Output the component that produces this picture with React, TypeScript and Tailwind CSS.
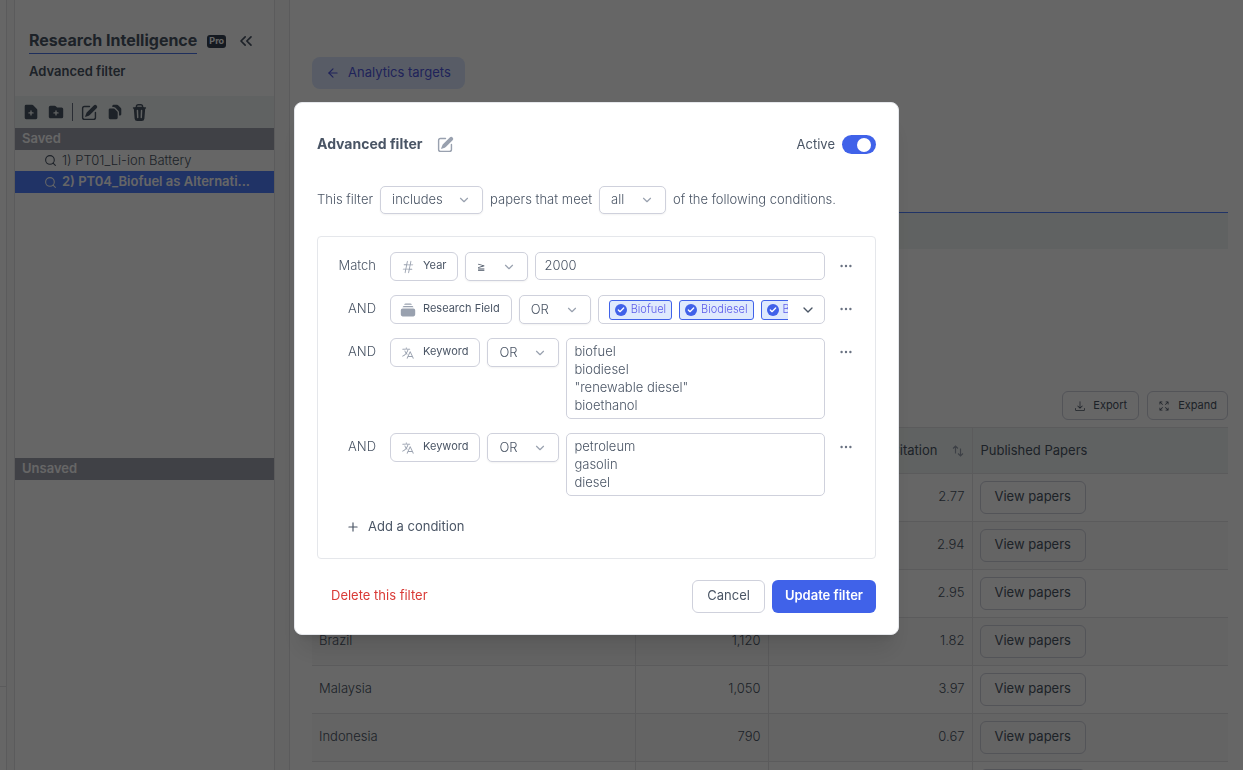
import { useState, type ReactNode } from 'react'
import { ArrowLeft, Check, ChevronDown, ChevronsLeft, Plus, Search } from 'lucide-react'
import {
  HiArrowDownTray,
  HiArrowsPointingOut,
  HiHashtag,
  HiLanguage,
  HiMiniDocumentDuplicate,
  HiMiniDocumentPlus,
  HiMiniEllipsisHorizontal,
  HiMiniFolderPlus,
  HiMiniPencilSquare,
  HiMiniRectangleStack,
  HiMiniTrash,
} from 'react-icons/hi2'

const countries = [
  { name: 'China', papers: '4,310', citation: '2.77' },
  { name: 'USA', papers: '3,280', citation: '2.94' },
  { name: 'India', papers: '2,460', citation: '2.95' },
  { name: 'Brazil', papers: '1,120', citation: '1.82' },
  { name: 'Malaysia', papers: '1,050', citation: '3.97' },
  { name: 'Indonesia', papers: '790', citation: '0.67' },
  { name: 'Italy', papers: '760', citation: '2.31' },
]

const fields = ['Biofuel', 'Biodiesel', 'Bioethanol']

function Dropdown({ label, options, className, small = false }: { label: string; options: string[]; className: string; small?: boolean }) {
  return (
    <span className={`relative block shrink-0 ${className}`}>
      <select aria-label={label} className={`h-full w-full appearance-none rounded-[5px] border border-[#cfd1dc] bg-white pl-[11px] pr-8 text-gray-600 shadow-xs outline-none ${small ? 'text-[10px]' : 'text-[13px]'}`}>
        {options.map((o) => <option key={o}>{o}</option>)}
      </select>
      <ChevronDown className="pointer-events-none absolute right-3 top-1/2 h-3.5 w-3.5 -translate-y-1/2 text-gray-400" strokeWidth={2} />
    </span>
  )
}

function Condition({ label, icon, field, children }: { label: string; icon: ReactNode; field: string; children: ReactNode }) {
  return (
    <div className="flex items-start">
      <span className="w-[38px] shrink-0 text-right leading-[26px]">{label}</span>
      <div className="ml-3.5 flex min-w-0 flex-1 items-start gap-[7px]">
        <button className="flex h-[29px] shrink-0 items-center gap-2 rounded-md border border-[#cfd1dc] bg-white pb-0.5 pl-2.5 pr-[11px] text-[11px] font-normal text-gray-600">
          <span className="flex w-3.5 justify-center pt-0.5 text-gray-400">{icon}</span>
          {field}
        </button>
        {children}
      </div>
      <button aria-label="More" className="ml-2 flex h-7 w-[26px] shrink-0 items-center justify-center text-gray-500">
        <HiMiniEllipsisHorizontal className="h-4 w-4" />
      </button>
    </div>
  )
}

function Tool({ label, children }: { label: string; children: ReactNode }) {
  return <button aria-label={label} className="flex h-8 w-[25px] items-center justify-center">{children}</button>
}

function Sidebar() {
  return (
    <aside className="flex w-[261px] shrink-0 flex-col border-x border-[#e3e3e6] bg-white">
      <div className="flex h-24 flex-col pl-3.5 pt-7">
        <div className="flex items-center">
          <h1 className="border-b border-[#4b74e6] pb-px text-[16px] font-bold leading-6 text-gray-600">Research Intelligence</h1>
          <span className="ml-2.5 flex h-[13px] items-center rounded-[3px] bg-gray-700 px-0.5 text-[9px] font-bold text-white">Pro</span>
          <button aria-label="Collapse" className="ml-2.5 text-gray-600"><ChevronsLeft className="h-5 w-5" strokeWidth={2} /></button>
        </div>
        <h2 className="mt-[7px] text-[13px] font-semibold leading-5 text-gray-600">Advanced filter</h2>
      </div>

      <div className="flex h-8 items-center bg-[#f1f6f5] pl-[3px] text-gray-600">
        <Tool label="New filter"><HiMiniDocumentPlus className="h-[18px] w-[18px]" /></Tool>
        <Tool label="New folder"><HiMiniFolderPlus className="h-[18px] w-[18px]" /></Tool>
        <span className="mx-1 h-[18px] w-px bg-gray-500" />
        <Tool label="Edit"><HiMiniPencilSquare className="h-[19px] w-[19px]" /></Tool>
        <Tool label="Duplicate"><HiMiniDocumentDuplicate className="h-[18px] w-[18px]" /></Tool>
        <Tool label="Delete"><HiMiniTrash className="h-[19px] w-[19px]" /></Tool>
      </div>

      <section className="flex h-[330px] flex-col text-[13px]">
        <h3 className="h-[22px] bg-[#a0a2b0] px-[7px] font-semibold leading-5 text-white">Saved</h3>
        <a href="#pt01" className="flex h-[21px] items-center gap-[5px] pl-[29px] font-light text-gray-600">
          <Search className="h-[13px] w-[13px] shrink-0" />
          1) PT01_Li-ion Battery
        </a>
        <a href="#pt04" className="flex h-[22px] items-center gap-[5px] whitespace-nowrap bg-[#5080ff] pl-[29px] font-semibold text-white">
          <Search className="h-[13px] w-[13px] shrink-0" />
          2) PT04_Biofuel as Alternati...
        </a>
      </section>
      <h3 className="h-[22px] bg-[#a0a2b0] px-[7px] text-[13px] font-semibold leading-5 text-white">Unsaved</h3>
    </aside>
  )
}

function Analytics() {
  return (
    <main className="min-w-0 flex-1 border-l border-[#e3e3e6] bg-white pb-4 pl-[22px] pr-[15px] pt-[57px] text-[13px] text-gray-600">
      <a href="#targets" className="inline-flex h-8 items-center gap-2 rounded-lg bg-[#dbe7ff] px-3.5 text-[#5057e0]">
        <ArrowLeft className="h-3.5 w-3.5" />
        Analytics targets
      </a>
      <div className="mt-[123px] h-[37px] border-t border-[#5080ff] bg-[#f1f6f5]" />

      <div className="mt-[142px] flex justify-end gap-2 text-[11px]">
        <button className="flex h-[29px] items-center gap-[7px] rounded-md border border-[#cfd1dc] px-[11px]">
          <HiArrowDownTray className="h-3 w-3" />
          Export
        </button>
        <button className="flex h-[29px] items-center gap-2 rounded-md border border-[#cfd1dc] px-2.5">
          <HiArrowsPointingOut className="h-3 w-3" />
          Expand
        </button>
      </div>

      <table className="mt-[7px] w-full table-fixed border-collapse">
        <colgroup>
          <col />
          <col className="w-[133px]" />
          <col className="w-[204px]" />
          <col className="w-[256px]" />
        </colgroup>
        <thead>
          <tr className="h-[46px] border-y border-[#e3e3e6] bg-[#f1f6f5]">
            <th className="px-2 text-left font-normal">Country</th>
            <th className="border-l border-[#e3e3e6] px-2 text-right font-normal">Papers</th>
            <th className="border-l border-[#e3e3e6] px-2 font-normal">
              <span className="flex items-center justify-end gap-3.5">
                Average Citation
                <svg viewBox="0 0 12 12" className="h-3 w-3 text-gray-400" fill="none" stroke="currentColor" strokeWidth="1.2">
                  <path d="M3.5 8.5V1M1 3.5L3.5 1 6 3.5M8.5 3.5V11M6 8.5L8.5 11 11 8.5" />
                </svg>
              </span>
            </th>
            <th className="border-l border-[#e3e3e6] px-2 text-left font-normal">Published Papers</th>
          </tr>
        </thead>
        <tbody>
          {countries.map((c) => (
            <tr key={c.name} className="h-12 border-b border-[#e3e3e6] even:bg-[#f9f9f9]">
              <td className="px-[7px] pb-0.5 font-light">{c.name}</td>
              <td className="border-l border-[#e3e3e6] px-[7px] pb-0.5 text-right font-light">{c.papers}</td>
              <td className="border-l border-[#e3e3e6] px-[7px] pb-0.5 text-right font-light">{c.citation}</td>
              <td className="border-l border-[#e3e3e6] px-[7px]">
                <button className="block h-[33px] rounded-md border border-[#cfd1dc] px-3.5 pb-0.5">View papers</button>
              </td>
            </tr>
          ))}
        </tbody>
      </table>
    </main>
  )
}

function FilterDialog() {
  const [active, setActive] = useState(true)

  return (
    <div role="dialog" aria-label="Advanced filter" className="w-full max-w-[605px] rounded-lg border border-gray-200 bg-white px-[22px] pb-[21px] pt-8 text-[13px] font-light text-gray-600 shadow-xl">
      <div className="flex h-[19px] items-center">
        <h2 className="pb-0.5 text-[14px] font-bold">Advanced filter</h2>
        <button aria-label="Rename" className="ml-3.5 text-gray-400"><HiMiniPencilSquare className="h-[19px] w-[19px]" /></button>
        <label className="ml-auto flex items-center gap-[7px] font-normal">
          Active
          <input type="checkbox" checked={active} onChange={(e) => setActive(e.target.checked)} className="peer sr-only" />
          <span className="flex h-[19px] w-[34px] items-center rounded-full bg-gray-300 px-[5px] peer-checked:justify-end peer-checked:bg-[#4062e9]">
            <span className="h-3.5 w-3.5 rounded-full bg-white" />
          </span>
        </label>
      </div>

      <div className="mt-8 flex items-center gap-[7px]">
        <span>This filter</span>
        <Dropdown label="Inclusion" options={['includes', 'excludes']} className="h-7 w-[103px]" />
        <span>papers that meet</span>
        <Dropdown label="Quantifier" options={['all', 'any']} className="h-7 w-[67px]" />
        <span>of the following conditions.</span>
      </div>

      <div className="mt-[22px] rounded border border-gray-200 pb-5 pl-5 pr-4 pt-[15px]">
        <div className="flex flex-col gap-3.5">
          <Condition label="Match" field="Year" icon={<HiHashtag className="h-3.5 w-3.5" />}>
            <Dropdown label="Comparison" options={['≧', '≦', '=']} className="h-[29px] w-[63px]" small />
            <input aria-label="Year" defaultValue="2000" className="h-7 min-w-0 flex-1 rounded-[5px] border border-[#cfd1dc] px-2 pb-0.5 outline-none" />
          </Condition>
          <Condition label="AND" field="Research Field" icon={<HiMiniRectangleStack className="h-4 w-4 shrink-0" />}>
            <Dropdown label="Operator" options={['OR', 'AND']} className="h-[29px] w-[72px]" />
            <div className="flex h-[29px] min-w-0 flex-1 items-center rounded-[5px] border border-[#cfd1dc] pl-2.5">
              <div className="flex min-w-0 flex-1 gap-[7px] overflow-hidden">
                {fields.map((f) => (
                  <span key={f} className="flex h-5 shrink-0 items-center gap-1 rounded-[3px] border border-[#4062e9] bg-[#dfeafd] px-[5px] text-[11px] text-[#5b5bea]">
                    <span className="flex h-3 w-3 items-center justify-center rounded-full bg-[#4062e9] text-white">
                      <Check className="h-2 w-2" strokeWidth={4} />
                    </span>
                    {f}
                  </span>
                ))}
              </div>
              <button aria-label="Choose fields" className="flex h-full w-9 items-center justify-center pl-1 text-gray-600"><ChevronDown className="h-4 w-4" /></button>
            </div>
          </Condition>
          <Condition label="AND" field="Keyword" icon={<HiLanguage className="h-3.5 w-3.5" />}>
            <Dropdown label="Operator" options={['OR', 'AND']} className="h-[29px] w-[72px]" />
            <textarea aria-label="Keywords" rows={4} defaultValue={'biofuel\nbiodiesel\n"renewable diesel"\nbioethanol'} className="block min-w-0 flex-1 resize-none rounded-[5px] border border-[#cfd1dc] px-[7px] pb-1 pt-[3px] leading-[18px] outline-none" />
          </Condition>
          <Condition label="AND" field="Keyword" icon={<HiLanguage className="h-3.5 w-3.5" />}>
            <Dropdown label="Operator" options={['OR', 'AND']} className="h-[29px] w-[72px]" />
            <textarea aria-label="Keywords" rows={3} defaultValue={'petroleum\ngasolin\ndiesel'} className="block min-w-0 flex-1 resize-none rounded-[5px] border border-[#cfd1dc] px-[7px] pb-1 pt-[3px] leading-[18px] outline-none" />
          </Condition>
        </div>
        <button className="ml-2 mt-5 flex h-[22px] items-center gap-2 font-normal">
          <Plus className="h-3.5 w-3.5" />
          Add a condition
        </button>
      </div>

      <div className="mt-[21px] flex items-center">
        <button className="ml-3.5 pb-0.5 font-normal text-[#d93a36]">Delete this filter</button>
        <button className="ml-auto h-[33px] rounded-md border border-[#cfd1dc] px-3.5 pb-0.5 font-normal">Cancel</button>
        <button className="ml-[7px] h-[33px] rounded-md bg-[#4062e9] px-[13px] pb-0.5 font-semibold text-white">Update filter</button>
      </div>
    </div>
  )
}

export default function App() {
  return (
    <div className="relative flex h-screen overflow-hidden bg-[#fafafa] font-['Inter','Liberation_Sans',sans-serif]">
      <div className="mr-[7px] flex w-[7px] shrink-0 flex-col border-r border-[#e3e3e6] bg-white">
        <div className="flex-1 border-b border-[#e3e3e6]" />
        <div className="h-[83px]" />
      </div>
      <Sidebar />
      <div className="w-3.5 shrink-0" />
      <Analytics />
      {/* backdrop + dialog */}
      <div className="fixed inset-0 flex items-start justify-center bg-black/60 pr-[50px] pt-[102px]">
        <FilterDialog />
      </div>
    </div>
  )
}
